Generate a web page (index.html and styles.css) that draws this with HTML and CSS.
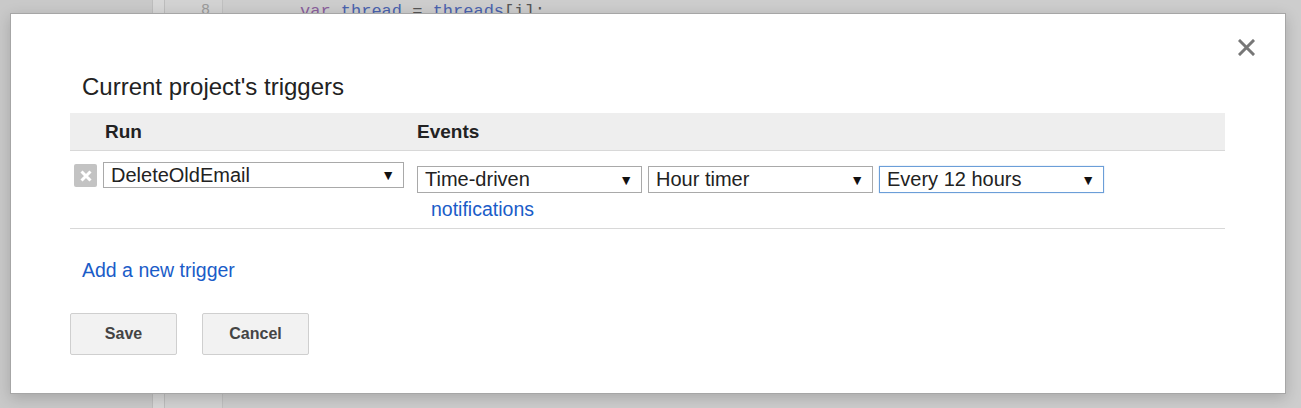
FILE: index.html
```html
<!DOCTYPE html>
<html>
<head>
<meta charset="utf-8">
<link rel="stylesheet" href="styles.css">
</head>
<body>
<div class="editor">
  <div class="side"></div>
  <div class="stripe"></div>
  <div class="gutter"><span class="ln">8</span></div>
  <div class="code"><span class="kw">var</span> <span class="id">thread</span> = <span class="id">threads</span>[i];</div>
</div>
<div class="dialog">
  <div class="close">
    <svg width="17" height="17" viewBox="0 0 17 17"><path d="M2 2L15 15M15 2L2 15" stroke="#777" stroke-width="3" stroke-linecap="square"/></svg>
  </div>
  <div class="title">Current project's triggers</div>
  <div class="table">
    <div class="head">
      <div class="h-run">Run</div>
      <div class="h-events">Events</div>
    </div>
    <div class="row">
      <div class="run-cell">
        <div class="del">
          <svg width="14" height="14" viewBox="0 0 14 14"><path d="M2.5 2.5L11.5 11.5M11.5 2.5L2.5 11.5" stroke="#fff" stroke-width="3"/></svg>
        </div>
        <div class="sel sel-run"><span>DeleteOldEmail</span><span class="arr">▼</span></div>
      </div>
      <div class="events-cell">
        <div class="sels">
          <div class="sel sel-ev"><span>Time-driven</span><span class="arr">▼</span></div>
          <div class="sel sel-ev"><span>Hour timer</span><span class="arr">▼</span></div>
          <div class="sel sel-ev focus"><span>Every 12 hours</span><span class="arr">▼</span></div>
        </div>
        <a class="link notif">notifications</a>
      </div>
    </div>
  </div>
  <a class="link add">Add a new trigger</a>
  <div class="buttons">
    <div class="btn">Save</div>
    <div class="btn">Cancel</div>
  </div>
</div>
</body>
</html>
```
FILE: styles.css
```css
html, body {
  margin: 0;
  padding: 0;
}
body {
  width: 1301px;
  height: 408px;
  overflow: hidden;
  position: relative;
  background: #cbcbcb;
  font-family: "Liberation Sans", Arial, sans-serif;
}
.editor {
  display: flex;
  height: 408px;
}
.side {
  width: 152px;
  background: #c9c9c9;
}
.stripe {
  width: 11px;
  background: #d7d7d7;
  border-left: 1px solid #bdbdbd;
  border-right: 1px solid #bdbdbd;
}
.gutter {
  width: 57px;
  background: #d2d2d2;
  border-right: 1px solid #c0c0c0;
  position: relative;
}
.ln {
  position: absolute;
  right: 12px;
  top: 2px;
  font-family: "Liberation Mono", monospace;
  font-size: 15px;
  color: #9a9a9a;
}
.code {
  flex: 1;
  background: #cdcdcd;
  padding-left: 77px;
  padding-top: 2px;
  font-family: "Liberation Mono", monospace;
  font-size: 17px;
  color: #555;
}
.kw { color: #8a5f9c; }
.id { color: #4a62ad; }

.dialog {
  position: absolute;
  left: 10px;
  top: 13px;
  height: 379px;
  background: #fff;
  border: 1px solid #a6a6a6;
  box-shadow: 0 4px 14px rgba(0,0,0,0.18);
  box-sizing: content-box;
  padding: 0 60px 0 59px;
  width: 1155px;
}
.close {
  position: absolute;
  left: 1227px;
  top: 25px;
  width: 17px;
  height: 17px;
}
.close svg { display: block; }
.title {
  margin-top: 60px;
  padding-left: 12px;
  font-size: 24px;
  line-height: 26px;
  color: #222;
}
.table {
  margin-top: 13px;
  width: 1155px;
}
.head {
  display: flex;
  height: 37px;
  align-items: center;
  background: #eeeeee;
  border-bottom: 1px solid #d8d8d8;
  font-weight: bold;
  font-size: 19px;
  color: #222;
}
.h-run {
  width: 312px;
  padding-left: 35px;
  box-sizing: border-box;
}
.h-events {
  padding-left: 35px;
}
.row {
  display: flex;
  height: 77px;
  border-bottom: 1px solid #d8d8d8;
}
.run-cell {
  width: 347px;
  display: flex;
  align-items: flex-start;
  padding-top: 11px;
  padding-left: 4px;
  gap: 6px;
  box-sizing: border-box;
}
.del {
  width: 23px;
  height: 23px;
  margin-top: 2px;
  background: #c3c3c3;
  border-radius: 2px;
  display: flex;
  align-items: center;
  justify-content: center;
}
.del svg { display: block; }
.sel {
  display: flex;
  align-items: center;
  justify-content: space-between;
  box-sizing: border-box;
  height: 26px;
  border: 1px solid #a9a9a9;
  background: #fff;
  font-size: 20px;
  color: #222;
  padding: 0 8px 0 7px;
}
.arr {
  font-size: 14px;
  color: #111;
}
.sel-run {
  width: 301px;
}
.events-cell {
  padding-top: 15px;
  display: flex;
  flex-direction: column;
}
.sels {
  display: flex;
  gap: 6px;
}
.sel-ev {
  width: 225px;
  height: 27px;
}
.sel-ev.focus {
  border-color: #6b9ed8;
  box-shadow: 0 0 1px #9bbfe8;
}
.link {
  color: #1a5cc8;
  font-size: 19.5px;
  text-decoration: none;
}
.notif {
  margin-top: 5px;
  padding-left: 14px;
  line-height: 22px;
}
.add {
  display: block;
  margin-top: 29px;
  padding-left: 12px;
  line-height: 24px;
}
.buttons {
  display: flex;
  gap: 25px;
  margin-top: 31px;
}
.btn {
  width: 107px;
  height: 42px;
  box-sizing: border-box;
  border: 1px solid #cfcfcf;
  background: #f2f2f2;
  border-radius: 2px;
  display: flex;
  align-items: center;
  justify-content: center;
  font-weight: bold;
  font-size: 16px;
  color: #444;
}
```
